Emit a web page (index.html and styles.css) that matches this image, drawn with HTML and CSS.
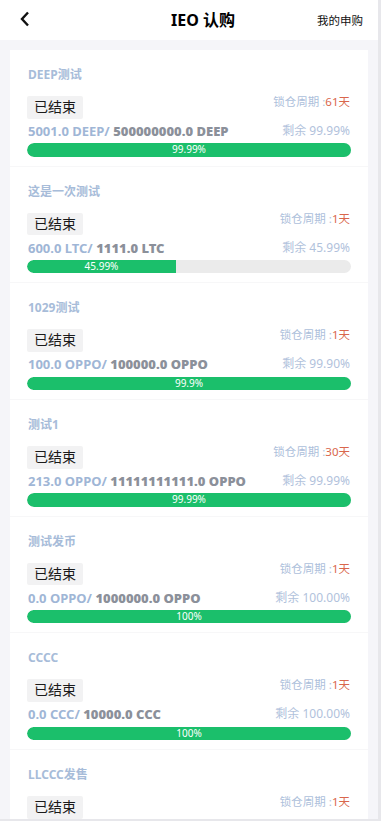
FILE: index.html
```html
<!DOCTYPE html>
<html lang="zh">
<head>
<meta charset="utf-8">
<title>IEO 认购</title>
<link rel="stylesheet" href="styles.css">
</head>
<body>
<div class="app">
  <header class="topbar">
    <span class="back">
      <svg width="10" height="16" viewBox="0 0 10 16"><polyline points="8,1.5 2,8 8,14.5" fill="none" stroke="#111" stroke-width="2.4" stroke-linejoin="miter" stroke-linecap="butt"/></svg>
    </span>
    <h1 class="title">IEO 认购</h1>
    <span class="mine">我的申购</span>
  </header>
  <main class="card">
    <section class="item">
      <div class="name">DEEP测试</div>
      <div class="row1"><span class="badge">已结束</span><span class="lock">锁仓周期 :<em>61天</em></span></div>
      <div class="row2"><span class="amt">5001.0 DEEP/ <b>500000000.0 DEEP</b></span><span class="left">剩余 99.99%</span></div>
      <div class="bar"><div class="fill" style="width:100%"></div><span class="pct">99.99%</span></div>
    </section>
    <section class="item">
      <div class="name">这是一次测试</div>
      <div class="row1"><span class="badge">已结束</span><span class="lock">锁仓周期 :<em>1天</em></span></div>
      <div class="row2"><span class="amt">600.0 LTC/ <b>1111.0 LTC</b></span><span class="left">剩余 45.99%</span></div>
      <div class="bar"><div class="fill" style="width:45.99%"><span class="pct">45.99%</span></div></div>
    </section>
    <section class="item">
      <div class="name">1029测试</div>
      <div class="row1"><span class="badge">已结束</span><span class="lock">锁仓周期 :<em>1天</em></span></div>
      <div class="row2"><span class="amt">100.0 OPPO/ <b>100000.0 OPPO</b></span><span class="left">剩余 99.90%</span></div>
      <div class="bar"><div class="fill" style="width:100%"></div><span class="pct">99.9%</span></div>
    </section>
    <section class="item">
      <div class="name">测试1</div>
      <div class="row1"><span class="badge">已结束</span><span class="lock">锁仓周期 :<em>30天</em></span></div>
      <div class="row2"><span class="amt">213.0 OPPO/ <b>11111111111.0 OPPO</b></span><span class="left">剩余 99.99%</span></div>
      <div class="bar"><div class="fill" style="width:100%"></div><span class="pct">99.99%</span></div>
    </section>
    <section class="item">
      <div class="name">测试发币</div>
      <div class="row1"><span class="badge">已结束</span><span class="lock">锁仓周期 :<em>1天</em></span></div>
      <div class="row2"><span class="amt">0.0 OPPO/ <b>1000000.0 OPPO</b></span><span class="left">剩余 100.00%</span></div>
      <div class="bar"><div class="fill" style="width:100%"></div><span class="pct">100%</span></div>
    </section>
    <section class="item">
      <div class="name">CCCC</div>
      <div class="row1"><span class="badge">已结束</span><span class="lock">锁仓周期 :<em>1天</em></span></div>
      <div class="row2"><span class="amt">0.0 CCC/ <b>10000.0 CCC</b></span><span class="left">剩余 100.00%</span></div>
      <div class="bar"><div class="fill" style="width:100%"></div><span class="pct">100%</span></div>
    </section>
    <section class="item">
      <div class="name">LLCCC发售</div>
      <div class="row1"><span class="badge">已结束</span><span class="lock">锁仓周期 :<em>1天</em></span></div>
    </section>
  </main>
</div>
</body>
</html>
```
FILE: styles.css
```css
html {
  margin: 0;
  background: #e7e7eb;
}
body {
  margin: 0;
  font-family: "Noto Sans", "Noto Sans CJK SC", sans-serif;
}
.app {
  width: 378px;
  height: 819px;
  overflow: hidden;
  background: #f5f5f9;
}
.topbar {
  height: 40px;
  background: #fff;
  display: grid;
  grid-template-columns: 1fr auto 1fr;
  align-items: center;
  padding: 0 15px 0 20px;
}
.back {
  display: flex;
  width: 10px;
  height: 16px;
  margin-top: -3px;
}
.title {
  margin: 0;
  text-align: center;
  font-size: 16px;
  font-weight: 700;
  color: #000;
  line-height: 40px;
  padding-left: 23px;
}
.mine {
  justify-self: end;
  font-size: 11.5px;
  color: #111;
}
.card {
  display: block;
  margin: 10px 10px 0;
  background: #fff;
}
.item {
  height: 116.667px;
  box-sizing: border-box;
  padding: 17px 17px 0;
  border-bottom: 1px solid #f7f7f8;
  display: flex;
  flex-direction: column;
}
.name {
  font-size: 12px;
  line-height: 16px;
  font-weight: 700;
  color: #a7bcd9;
  padding-left: 1px;
}
.row1 {
  margin-top: 13px;
  display: flex;
  justify-content: space-between;
  align-items: flex-start;
}
.badge {
  display: block;
  height: 22.67px;
  line-height: 22.67px;
  padding: 0 7px;
  background: #f2f2f3;
  border-radius: 2px;
  font-size: 14px;
  color: #1a1a1a;
}
.lock {
  font-size: 11.5px;
  line-height: 16px;
  margin-top: -2px;
  color: #adc0db;
  margin-right: 1px;
}
.lock em {
  font-style: normal;
  color: #d9664c;
}
.row2 {
  margin-top: 4.33px;
  display: flex;
  justify-content: space-between;
  align-items: center;
  line-height: 16px;
}
.amt {
  font-size: 13px;
  font-weight: 700;
  color: #9fb6d6;
  padding-left: 1px;
}
.amt b {
  color: #8b909a;
}
.left {
  font-size: 12px;
  color: #b1c2dc;
  margin-right: 1px;
}
.bar {
  margin-top: 4.33px;
  height: 13.33px;
  border-radius: 7px;
  background: #ebebeb;
  position: relative;
  overflow: hidden;
}
.fill {
  height: 100%;
  background: #1bbf6b;
  border-radius: 7px 0 0 7px;
  position: relative;
}
.pct {
  position: absolute;
  left: 0;
  right: 0;
  top: 0;
  text-align: center;
  font-size: 10px;
  line-height: 13.33px;
  color: #fff;
}
```
